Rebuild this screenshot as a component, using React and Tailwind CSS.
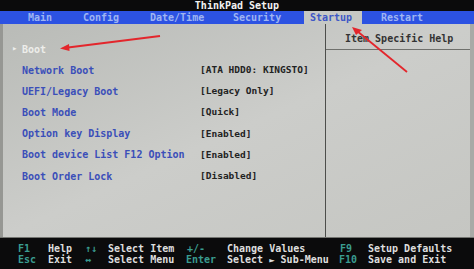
import React from "react";

const mono = { fontFamily: '"DejaVu Sans Mono", "Liberation Mono", monospace' };

const tabs = [
  { label: "Main", w: "w-[55px]" },
  { label: "Config", w: "w-[67px]" },
  { label: "Date/Time", w: "w-[83px]" },
  { label: "Security", w: "w-[77px]" },
];

const rows = [
  { label: "Network Boot", value: "[ATA HDD0: KINGSTO]" },
  { label: "UEFI/Legacy Boot", value: "[Legacy Only]" },
  { label: "Boot Mode", value: "[Quick]" },
  { label: "Option key Display", value: "[Enabled]" },
  { label: "Boot device List F12 Option", value: "[Enabled]" },
  { label: "Boot Order Lock", value: "[Disabled]" },
];

function Arrows() {
  return (
    <svg className="absolute inset-0 pointer-events-none" width="474" height="269" viewBox="0 0 474 269">
      <line x1="160" y1="36" x2="68" y2="47.5" stroke="#e3262c" strokeWidth="1.8" />
      <polygon points="60,48.5 69,44 69.5,51" fill="#e3262c" />
      <line x1="407" y1="72" x2="357" y2="31" stroke="#e3262c" strokeWidth="1.8" />
      <polygon points="352,27 362,30 356,35" fill="#e3262c" />
    </svg>
  );
}

export default function App() {
  return (
    <div className="relative w-[474px] h-[269px] bg-[#0b0b0c] flex flex-col overflow-hidden text-[10px] font-bold" style={mono}>
      {/* title */}
      <div className="h-[11px] flex items-center justify-center text-[#f2f2f2] leading-none pt-[1px]">
        ThinkPad Setup
      </div>

      {/* menu bar */}
      <div className="h-[13px] bg-[#2c52e2] flex items-center pl-[22px] leading-none">
        {tabs.map((t) => (
          <div key={t.label} className={`${t.w} pl-[6px] text-[#9fb5f2]`}>
            {t.label}
          </div>
        ))}
        <div className="w-[58px] h-full bg-[#c6c8c4] pl-[6px] flex items-center text-[#3d57c6]">Startup</div>
        <div className="ml-[13px] pl-[6px] text-[#9fb5f2]">Restart</div>
      </div>

      {/* body */}
      <div className="h-[214px] flex border-b border-[#747571] bg-linear-to-br from-[#b9bbb7] via-[#cccdca] to-[#c5c6c2]">
        <div className="w-[325px] border-l-[3px] border-[#969793] pl-[9px] pt-[14.5px]">
          <div className="h-[21px] flex items-center text-[#ededea]">
            <span className="w-[10px] text-[9px]">▸</span>
            <span>Boot</span>
          </div>
          {rows.map((r) => (
            <div key={r.label} className="h-[21.2px] flex items-center">
              <span className="w-[10px]" />
              <span className="w-[178px] text-[#3b4fb9]">{r.label}</span>
              <span className="text-[9.5px] text-[#222]">{r.value}</span>
            </div>
          ))}
        </div>
        <div className="flex-1 flex flex-col border-l border-[#4d4e4b] border-r-4 border-r-[#a9aaa6]">
          <div className="h-[26px] border-b border-[#6f706c] pl-[19px] pt-[10px] leading-none text-[#333]">
            Item Specific Help
          </div>
        </div>
      </div>

      {/* footer */}
      <div className="flex-1 pt-[6px] pl-[18px] leading-[10.5px]">
        <div className="flex h-[10.5px]">
          <span className="w-[30px] text-[#3a9c90]">F1</span>
          <span className="w-[37px] text-[#dedede]">Help</span>
          <span className="w-[23px] text-[#3a9c90]">↑↓</span>
          <span className="w-[78px] text-[#dedede]">Select Item</span>
          <span className="w-[41px] text-[#3a9c90] pl-[1px]">+/-</span>
          <span className="w-[112px] text-[#dedede]">Change Values</span>
          <span className="w-[29px] text-[#3a9c90] pl-[1px]">F9</span>
          <span className="text-[#dedede]">Setup Defaults</span>
        </div>
        <div className="flex h-[10.5px]">
          <span className="w-[30px] text-[#3a9c90]">Esc</span>
          <span className="w-[37px] text-[#dedede]">Exit</span>
          <span className="w-[23px] text-[#3a9c90]">↔</span>
          <span className="w-[78px] text-[#dedede]">Select Menu</span>
          <span className="w-[41px] text-[#3a9c90]">Enter</span>
          <span className="w-[112px] text-[#dedede]">
            Select <span className="text-[9px]">►</span> Sub-Menu
          </span>
          <span className="w-[29px] text-[#3a9c90]">F10</span>
          <span className="text-[#dedede]">Save and Exit</span>
        </div>
      </div>

      <Arrows />
    </div>
  );
}
